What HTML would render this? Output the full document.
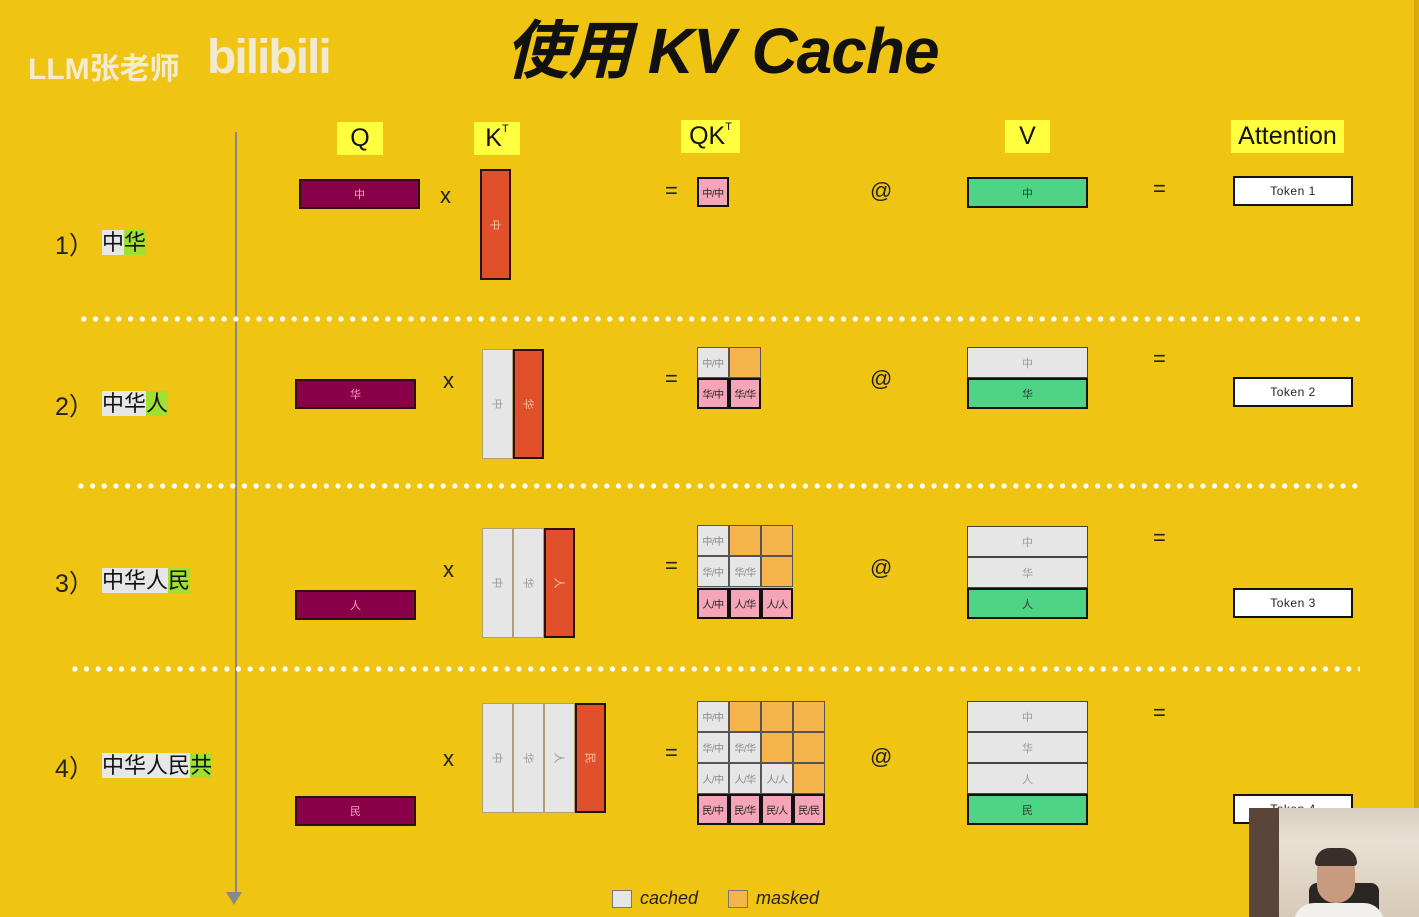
<!DOCTYPE html>
<html><head><meta charset="utf-8"><style>
*{margin:0;padding:0;box-sizing:border-box}
body{width:1419px;height:917px;background:#f0c413;position:relative;overflow:hidden;font-family:"Liberation Sans","Noto Sans CJK SC",sans-serif}
.a{position:absolute}
.q{position:absolute;background:#8a0048;border:2px solid #2a1010;color:#ff9fd0;font-size:11px;display:flex;align-items:center;justify-content:center;width:121px;height:30px}
.k{position:absolute;width:31px;height:110px;display:flex;align-items:center;justify-content:center;font-size:11px}
.k span{transform:rotate(90deg);display:block}
.kg{background:#e6e6e6;border:1px solid #b0a070;color:#999}
.ko{background:#e0502a;border:2px solid #2a1010;color:#ffc0a0}
.c{position:absolute;width:32px;height:31px;font-size:10px;display:flex;align-items:center;justify-content:center;letter-spacing:-0.5px}
.cg{background:#e6e6e6;border:1px solid #555;color:#888}
.co{background:#f5b54c;border:1px solid #555}
.cp{background:#f4a6b8;border:2px solid #111;color:#222}
.v{position:absolute;left:967px;width:121px;height:31px;font-size:11px;display:flex;align-items:center;justify-content:center}
.vg{background:#e6e6e6;border:1px solid #444;color:#999}
.vn{background:#4fd486;border:2px solid #111;color:#333}
.t{position:absolute;left:1233px;width:120px;height:30px;background:#fff;border:2px solid #111;font-size:12px;display:flex;align-items:center;justify-content:center;letter-spacing:0.5px;color:#222}
.op{position:absolute;font-size:22px;color:#222}
.h{position:absolute;background:#ffff40;font-size:25px;color:#111;height:33px;line-height:33px;text-align:center}
.dot{position:absolute;height:6px;background-image:radial-gradient(circle,#fff 2.4px,transparent 2.8px);background-size:11.7px 6px}
.lab{position:absolute;font-size:25px;color:#222}
.w{position:absolute;font-size:22px;color:#111;height:33px;line-height:33px}
.w b{font-weight:normal;background:#e6e6e6}
.w i{font-style:normal;background:#9fe030}
</style></head><body>
<div class="a" style="left:28px;top:44px;font-size:30px;color:#f5ecd0;font-weight:bold">LLM张老师</div>
<div class="a" style="left:207px;top:30px;font-size:48px;color:#f2ead0;font-weight:bold;letter-spacing:-2px">bilibili</div>
<div class="a" style="left:505px;top:6px;font-size:64px;line-height:90px;font-weight:bold;font-style:italic;color:#111;letter-spacing:-1px">使用 KV Cache</div>

<div class="a" style="left:235px;top:132px;width:2px;height:765px;background:#888"></div>
<div class="a" style="left:226px;top:892px;width:0;height:0;border-left:8px solid transparent;border-right:8px solid transparent;border-top:13px solid #888"></div>

<div class="h" style="left:337px;top:122px;width:46px">Q</div>
<div class="h" style="left:474px;top:122px;width:46px">K<sup style="font-size:11px;vertical-align:top;line-height:14px">T</sup></div>
<div class="h" style="left:681px;top:120px;width:59px">QK<sup style="font-size:11px;vertical-align:top;line-height:14px">T</sup></div>
<div class="h" style="left:1005px;top:120px;width:45px">V</div>
<div class="h" style="left:1231px;top:120px;width:113px">Attention</div>

<div class="dot" style="left:78px;top:316px;width:1282px"></div>
<div class="dot" style="left:75px;top:483px;width:1285px"></div>
<div class="dot" style="left:69px;top:666px;width:1291px"></div>

<div class="lab" style="left:55px;top:226px">1）</div>
<div class="w" style="left:102px;top:226px"><b>中</b><i>华</i></div>
<div class="lab" style="left:55px;top:387px">2）</div>
<div class="w" style="left:102px;top:387px"><b>中华</b><i>人</i></div>
<div class="lab" style="left:55px;top:564px">3）</div>
<div class="w" style="left:102px;top:564px"><b>中华人</b><i>民</i></div>
<div class="lab" style="left:55px;top:749px">4）</div>
<div class="w" style="left:102px;top:749px"><b>中华人民</b><i>共</i></div>

<div class="q" style="left:299px;top:179px">中</div>
<div class="op" style="left:440px;top:183px">x</div>
<div class="k ko" style="left:480px;top:169px;height:111px"><span>中</span></div>
<div class="op" style="left:665px;top:178px">=</div>
<div class="c cp" style="left:697px;top:177px;height:30px">中/中</div>
<div class="op" style="left:870px;top:178px">@</div>
<div class="v vn" style="top:177px">中</div>
<div class="op" style="left:1153px;top:176px">=</div>
<div class="t" style="top:176px">Token 1</div>

<div class="q" style="left:295px;top:379px">华</div>
<div class="op" style="left:443px;top:368px">x</div>
<div class="k kg" style="left:482px;top:349px"><span>中</span></div>
<div class="k ko" style="left:513px;top:349px"><span>华</span></div>
<div class="op" style="left:665px;top:366px">=</div>
<div class="c cg" style="left:697px;top:347px">中/中</div>
<div class="c co" style="left:729px;top:347px"></div>
<div class="c cp" style="left:697px;top:378px">华/中</div>
<div class="c cp" style="left:729px;top:378px">华/华</div>
<div class="op" style="left:870px;top:366px">@</div>
<div class="v vg" style="top:347px">中</div>
<div class="v vn" style="top:378px">华</div>
<div class="op" style="left:1153px;top:346px">=</div>
<div class="t" style="top:377px">Token 2</div>

<div class="q" style="left:295px;top:590px">人</div>
<div class="op" style="left:443px;top:557px">x</div>
<div class="k kg" style="left:482px;top:528px"><span>中</span></div>
<div class="k kg" style="left:513px;top:528px"><span>华</span></div>
<div class="k ko" style="left:544px;top:528px"><span>人</span></div>
<div class="op" style="left:665px;top:553px">=</div>
<div class="c cg" style="left:697px;top:525px">中/中</div>
<div class="c co" style="left:729px;top:525px"></div>
<div class="c co" style="left:761px;top:525px"></div>
<div class="c cg" style="left:697px;top:556px">华/中</div>
<div class="c cg" style="left:729px;top:556px">华/华</div>
<div class="c co" style="left:761px;top:556px"></div>
<div class="c cp" style="left:697px;top:588px">人/中</div>
<div class="c cp" style="left:729px;top:588px">人/华</div>
<div class="c cp" style="left:761px;top:588px">人/人</div>
<div class="op" style="left:870px;top:555px">@</div>
<div class="v vg" style="top:526px">中</div>
<div class="v vg" style="top:557px">华</div>
<div class="v vn" style="top:588px">人</div>
<div class="op" style="left:1153px;top:525px">=</div>
<div class="t" style="top:588px">Token 3</div>

<div class="q" style="left:295px;top:796px">民</div>
<div class="op" style="left:443px;top:746px">x</div>
<div class="k kg" style="left:482px;top:703px"><span>中</span></div>
<div class="k kg" style="left:513px;top:703px"><span>华</span></div>
<div class="k kg" style="left:544px;top:703px"><span>人</span></div>
<div class="k ko" style="left:575px;top:703px"><span>民</span></div>
<div class="op" style="left:665px;top:740px">=</div>
<div class="c cg" style="left:697px;top:701px">中/中</div>
<div class="c co" style="left:729px;top:701px"></div>
<div class="c co" style="left:761px;top:701px"></div>
<div class="c co" style="left:793px;top:701px"></div>
<div class="c cg" style="left:697px;top:732px">华/中</div>
<div class="c cg" style="left:729px;top:732px">华/华</div>
<div class="c co" style="left:761px;top:732px"></div>
<div class="c co" style="left:793px;top:732px"></div>
<div class="c cg" style="left:697px;top:763px">人/中</div>
<div class="c cg" style="left:729px;top:763px">人/华</div>
<div class="c cg" style="left:761px;top:763px">人/人</div>
<div class="c co" style="left:793px;top:763px"></div>
<div class="c cp" style="left:697px;top:794px">民/中</div>
<div class="c cp" style="left:729px;top:794px">民/华</div>
<div class="c cp" style="left:761px;top:794px">民/人</div>
<div class="c cp" style="left:793px;top:794px">民/民</div>
<div class="op" style="left:870px;top:744px">@</div>
<div class="v vg" style="top:701px">中</div>
<div class="v vg" style="top:732px">华</div>
<div class="v vg" style="top:763px">人</div>
<div class="v vn" style="top:794px">民</div>
<div class="op" style="left:1153px;top:700px">=</div>
<div class="t" style="top:794px">Token 4</div>

<div class="a" style="left:612px;top:890px;width:20px;height:18px;background:#e6e6e6;border:1px solid #777"></div>
<div class="a" style="left:640px;top:888px;font-size:18px;font-style:italic;color:#222">cached</div>
<div class="a" style="left:728px;top:890px;width:20px;height:18px;background:#f5b54c;border:1px solid #777"></div>
<div class="a" style="left:756px;top:888px;font-size:18px;font-style:italic;color:#222">masked</div>

<div class="a" style="left:1249px;top:808px;width:170px;height:109px;background:linear-gradient(180deg,#d8cfc0 0%,#e8e0d2 30%,#d8cbb8 100%);overflow:hidden">
 <div class="a" style="left:0;top:0;width:30px;height:109px;background:#5a4638"></div>
 <div class="a" style="left:60px;top:75px;width:70px;height:40px;background:#2a2624;border-radius:8px"></div>
 <div class="a" style="left:68px;top:45px;width:38px;height:50px;background:#c89a80;border-radius:18px"></div>
 <div class="a" style="left:66px;top:40px;width:42px;height:18px;background:#3a2e28;border-radius:18px 18px 4px 4px"></div>
 <div class="a" style="left:45px;top:95px;width:90px;height:20px;background:#f2f0ec;border-radius:20px 20px 0 0"></div>
</div>
<div class="a" style="left:1414px;top:0;width:5px;height:808px;background:#d9a90e"></div>
</body></html>
